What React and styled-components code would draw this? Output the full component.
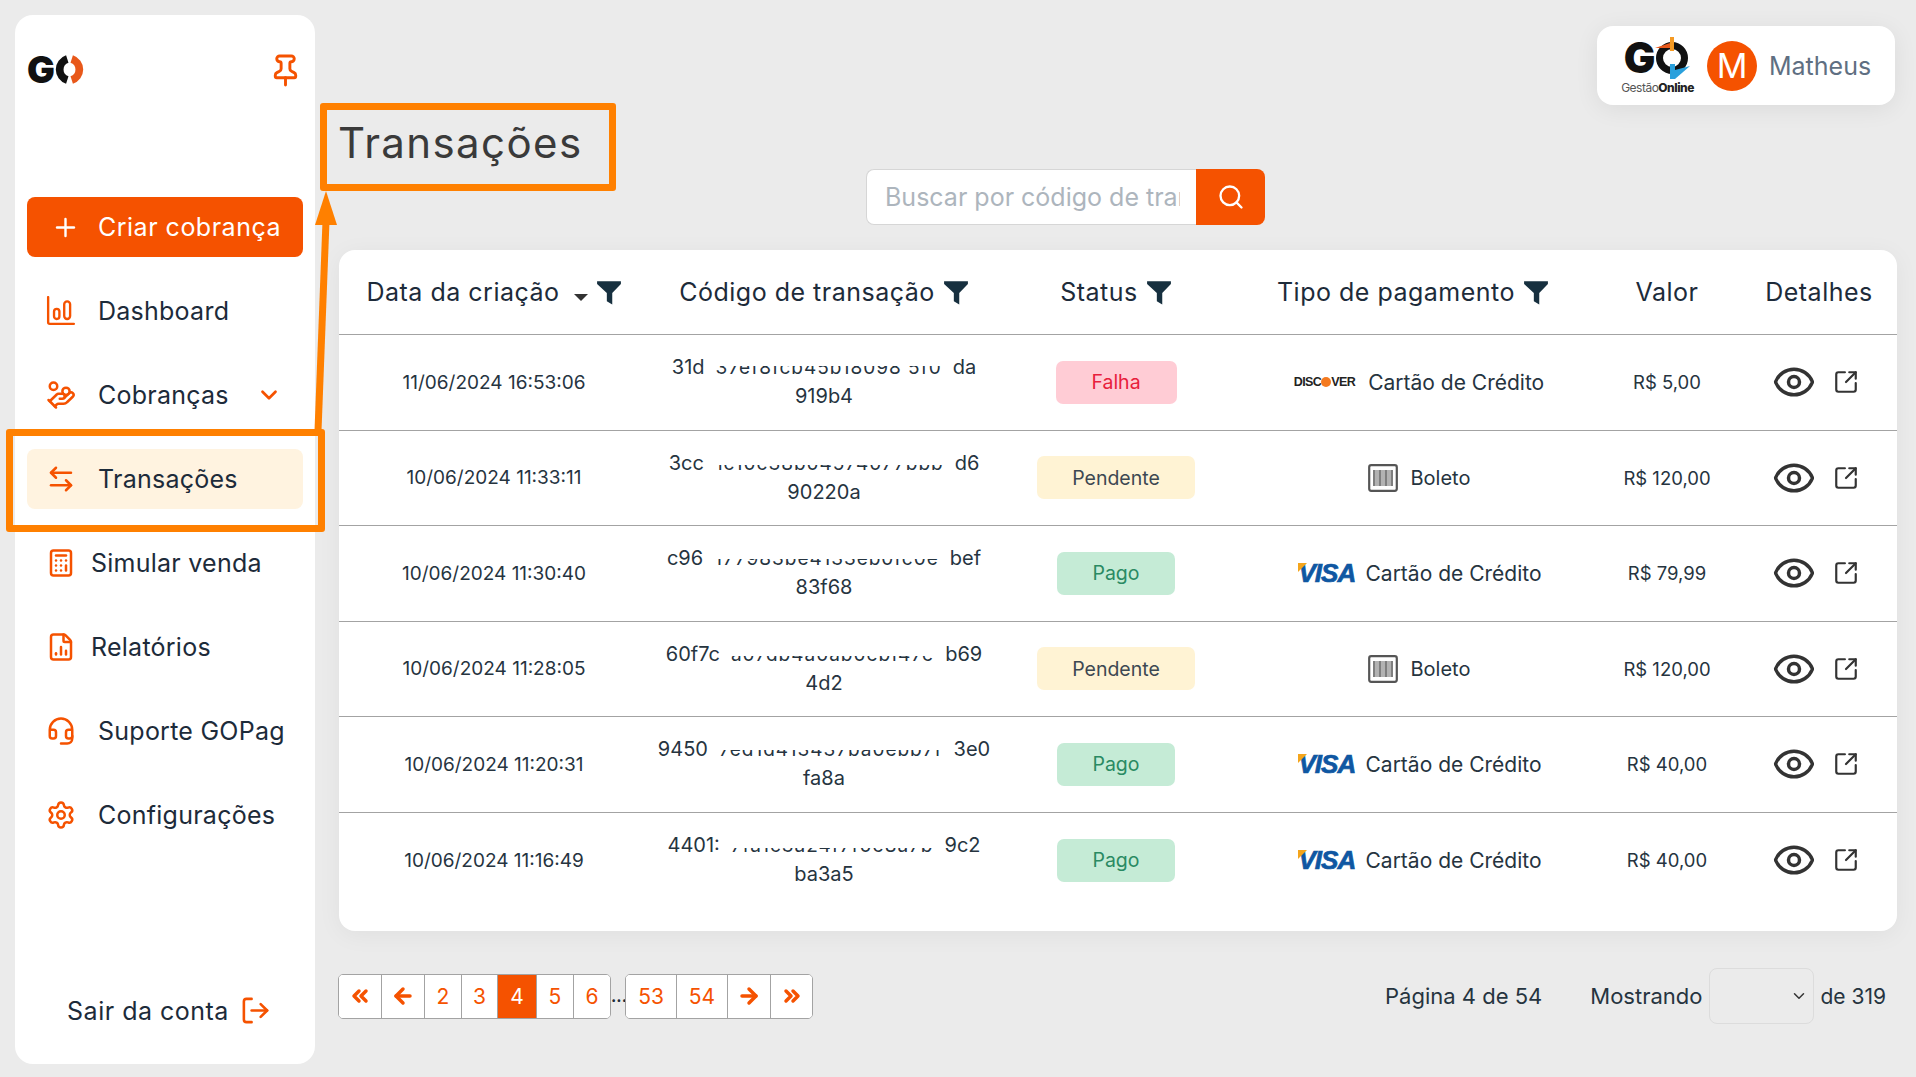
import React from "react";
import styled, { createGlobalStyle } from "styled-components";
import {
  ArrowLeft,
  ArrowLeftRight,
  ArrowRight,
  Calculator,
  ChevronDown,
  ChevronsLeft,
  ChevronsRight,
  Eye,
  FileChartColumn,
  HandCoins,
  Headset,
  LogOut,
  Pin,
  Plus,
  Search,
  Settings,
  SquareArrowOutUpRight
} from "lucide-react";

const orange = "#f55200";
const ink = "#1d2b3a";

const rows = [
  { date: "11/06/2024 16:53:06", head: "31d", mid: "37ef8fcb45b18098 5f0", tail: "da", rest: "919b4", cover: 13, status: "Falha", pay: "discover", value: "R$ 5,00" },
  { date: "10/06/2024 11:33:11", head: "3cc", mid: "1c10c38b04574077bbb", tail: "d6", rest: "90220a", cover: 16, status: "Pendente", pay: "boleto", value: "R$ 120,00" },
  { date: "10/06/2024 11:30:40", head: "c96", mid: "177983be4133eb0fc0e", tail: "bef", rest: "83f68", cover: 15, status: "Pago", pay: "visa", value: "R$ 79,99" },
  { date: "10/06/2024 11:28:05", head: "60f7c", mid: "a07db4a0ab0ebf47e", tail: "b69", rest: "4d2", cover: 16, status: "Pendente", pay: "boleto", value: "R$ 120,00" },
  { date: "10/06/2024 11:20:31", head: "9450", mid: "7ed1d413437ba0ebb7f", tail: "3e0", rest: "fa8a", cover: 15, status: "Pago", pay: "visa", value: "R$ 40,00" },
  { date: "10/06/2024 11:16:49", head: "4401:", mid: "7fa1c3a24f7f0e8a7b", tail: "9c2", rest: "ba3a5", cover: 17, status: "Pago", pay: "visa", value: "R$ 40,00" }
];

const columns = ["310px", "350px", "234px", "360px", "148px", "1fr"].join(" ");

const Funnel = () => (
  <svg width="26" height="26" viewBox="0 0 24 24" fill="#17303f">
    <path d="M1 2h22v2.500l-8 8.500v10.500l-5-3V13L1 4.500z" />
  </svg>
);

const Barcode = () => (
  <svg width="30" height="28" viewBox="0 0 30 28" fill="none" stroke="#555">
    <rect x="1.200" y="1.200" width="27.600" height="25.600" rx="2" strokeWidth="2.200" />
    {[6, 8, 10, 12, 14, 16, 18, 20, 22, 24].map((x, i) => (
      <line key={x} x1={x} x2={x} y1="6" y2="22" strokeWidth={i % 3 === 0 ? 1.500 : 0.900} />
    ))}
  </svg>
);

const DashIcon = () => (
  <svg width="30" height="30" viewBox="0 0 28 28" fill="none" stroke="currentColor" strokeWidth="2.200" strokeLinecap="round">
    <path d="M2 1v23.500a1.500 1.500 0 0 0 1.500 1.500H26" />
    <rect x="7.500" y="12" width="5" height="9.500" rx="2.500" />
    <rect x="17" y="5" width="5.500" height="16.500" rx="2.750" />
  </svg>
);

const SideLogoO = () => (
  <svg width="31" height="31" viewBox="0 0 28 28" fill="none" strokeWidth="7">
    <path d="M12 4.500A10 10 0 0 0 12 23.500" stroke="#111" />
    <path d="M16 4.500A10 10 0 0 1 16 23.500" stroke="#e8581a" />
  </svg>
);

const UserLogoO = () => (
  <svg width="38" height="44" viewBox="0 0 38 44" fill="none">
    <circle cx="19" cy="22" r="12.500" stroke="#111" strokeWidth="7" />
    <polygon points="2,12 17,7 17,12" fill="#e8591c" />
    <rect x="17" y="1" width="4" height="14" fill="#f59a23" />
    <rect x="17" y="28" width="5" height="15" fill="#2aa0dc" />
    <polygon points="22,43 37,30 22,34" fill="#2aa0dc" />
  </svg>
);

const Page = () => (
  <Shell>
    <GlobalStyle />
    <Sidebar>
      <SideTop>
        <Logo>
          G<SideLogoO />
        </Logo>
        <Pin size={35} color={orange} strokeWidth={2} />
      </SideTop>
      <CreateButton>
        <Plus size={29} strokeWidth={2} />
        Criar cobrança
      </CreateButton>
      <NavItem>
        <DashIcon />
        Dashboard
      </NavItem>
      <NavItem>
        <HandCoins size={30} strokeWidth={2} />
        Cobranças
        <NavChevron>
          <ChevronDown size={26} strokeWidth={2.500} />
        </NavChevron>
      </NavItem>
      <NavItem $active>
        <ArrowLeftRight size={30} strokeWidth={2} />
        Transações
      </NavItem>
      <NavItem $tight>
        <Calculator size={30} strokeWidth={2} />
        Simular venda
      </NavItem>
      <NavItem $tight>
        <FileChartColumn size={30} strokeWidth={2} />
        Relatórios
      </NavItem>
      <NavItem>
        <Headset size={30} strokeWidth={2} />
        Suporte GOPag
      </NavItem>
      <NavItem>
        <Settings size={30} strokeWidth={2} />
        Configurações
      </NavItem>
      <Logout>
        Sair da conta
        <LogOut size={31} color={orange} strokeWidth={2} />
      </Logout>
    </Sidebar>

    <Main>
      <Header>
        <Title>Transações</Title>
        <SearchBar>
          <SearchInput placeholder="Buscar por código de transação" />
          <SearchButton>
            <Search size={28} strokeWidth={2} />
          </SearchButton>
        </SearchBar>
        <UserCard>
          <UserLogo>
            <UserLogoMark>
              G<UserLogoO />
            </UserLogoMark>
            <UserLogoText>
              Gestão<b>Online</b>
            </UserLogoText>
          </UserLogo>
          <Avatar>M</Avatar>
          <UserName>Matheus</UserName>
        </UserCard>
      </Header>

      <Card>
        <HeadRow>
          <HeadCell>
            Data da criação
            <SortCaret />
            <Funnel />
          </HeadCell>
          <HeadCell>
            Código de transação
            <Funnel />
          </HeadCell>
          <HeadCell>
            Status
            <Funnel />
          </HeadCell>
          <HeadCell>
            Tipo de pagamento
            <Funnel />
          </HeadCell>
          <HeadCell>Valor</HeadCell>
          <HeadCell>Detalhes</HeadCell>
        </HeadRow>
        {rows.map(row => (
          <Row key={row.date}>
            <DateCell>{row.date}</DateCell>
            <CodeCell>
              <CodeLine>
                <span>{row.head}</span>
                <Hidden $cover={row.cover}>{row.mid}</Hidden>
                <span>{row.tail}</span>
              </CodeLine>
              <span>{row.rest}</span>
            </CodeCell>
            <Cell>
              <Badge $status={row.status}>{row.status}</Badge>
            </Cell>
            <PayCell>
              {row.pay === "discover" && (
                <Discover>
                  DISC<i />VER
                </Discover>
              )}
              {row.pay === "visa" && <Visa>VISA</Visa>}
              {row.pay === "boleto" ? (
                <>
                  <Barcode />
                  <BoletoLabel>Boleto</BoletoLabel>
                </>
              ) : (
                <CardLabel>Cartão de Crédito</CardLabel>
              )}
            </PayCell>
            <ValueCell>{row.value}</ValueCell>
            <Actions>
              <Eye size={44} strokeWidth={1.900} />
              <SquareArrowOutUpRight size={26} strokeWidth={2} />
            </Actions>
          </Row>
        ))}
      </Card>

      <Footer>
        <Pager>
          <PageGroup>
            <PageCell $w={42}>
              <ChevronsLeft size={24} strokeWidth={3.500} />
            </PageCell>
            <PageCell $w={43}>
              <ArrowLeft size={24} strokeWidth={3.500} />
            </PageCell>
            <PageCell $w={37}>2</PageCell>
            <PageCell $w={36}>3</PageCell>
            <PageCell $w={39} $current>4</PageCell>
            <PageCell $w={37}>5</PageCell>
            <PageCell $w={37}>6</PageCell>
          </PageGroup>
          <Dots>...</Dots>
          <PageGroup>
            <PageCell $w={50}>53</PageCell>
            <PageCell $w={51}>54</PageCell>
            <PageCell $w={43}>
              <ArrowRight size={24} strokeWidth={3.500} />
            </PageCell>
            <PageCell $w={42}>
              <ChevronsRight size={24} strokeWidth={3.500} />
            </PageCell>
          </PageGroup>
        </Pager>
        <PageInfo>
          <PageCount>Página 4 de 54</PageCount>
          Mostrando
          <SizeBox>
            <PageSize>
              <option></option>
            </PageSize>
            <SizeChevron>
              <ChevronDown size={18} strokeWidth={2} />
            </SizeChevron>
          </SizeBox>
          <TotalLabel>de 319</TotalLabel>
        </PageInfo>
      </Footer>
    </Main>

    <MarkBox $x={320} $y={103} $w={296} $h={88} />
    <MarkBox $x={6} $y={429} $w={319} $h={103} />
    <MarkArrow width="40" height="245" viewBox="0 0 40 245">
      <line x1="24" y1="30" x2="16" y2="240" stroke="#ff8000" strokeWidth="7" />
      <polygon points="24,0 35,34 13,34" fill="#ff8000" />
    </MarkArrow>
  </Shell>
);

export default Page;

// ==== STYLES ====
const GlobalStyle = createGlobalStyle`
  html, body {
    margin: 0;
    height: 100%;
    background: #ebebeb;
    overflow: hidden;
  }
  * {
    box-sizing: border-box;
  }
`;

const Shell = styled.div`
  position: relative;
  display: flex;
  width: 1916px;
  height: 1077px;
  background: #ebebeb;
  color: ${ink};
  font-family: Inter, "Liberation Sans", sans-serif;
`;

const Sidebar = styled.aside`
  width: 300px;
  height: 1049px;
  margin: 15px 0 0 15px;
  padding: 38px 12px 0;
  display: flex;
  flex-direction: column;
  gap: 24px;
  background: #fff;
  border-radius: 18px;
`;

const SideTop = styled.div`
  height: 120px;
  display: flex;
  justify-content: space-between;
  align-items: flex-start;
`;

const Logo = styled.div`
  display: flex;
  align-items: center;
  height: 32px;
  font-size: 37px;
  font-weight: 900;
  color: #111;
  letter-spacing: -1px;
`;

const CreateButton = styled.button`
  height: 60px;
  padding: 0 0 0 24px;
  display: flex;
  align-items: center;
  gap: 18px;
  border: 0;
  border-radius: 8px;
  background: ${orange};
  color: #fff;
  font: 400 25px Inter, sans-serif;
  letter-spacing: 0.5px;
`;

const NavItem = styled.div`
  height: 60px;
  padding-left: 19px;
  display: flex;
  align-items: center;
  gap: ${props => (props.$tight ? "15px" : "22px")};
  border-radius: 8px;
  background: ${props => (props.$active ? "#fff3e0" : "transparent")};
  font-size: 25px;
  letter-spacing: 0.25px;
  svg {
    color: ${orange};
    flex-shrink: 0;
  }
`;

const NavChevron = styled.span`
  display: flex;
  margin-left: auto;
  padding-right: 21px;
`;

const Logout = styled.div`
  margin-top: auto;
  margin-bottom: 38px;
  padding-left: 8px;
  display: flex;
  justify-content: center;
  align-items: center;
  gap: 11px;
  font-size: 25px;
  letter-spacing: 0.5px;
`;

const Main = styled.main`
  width: 1558px;
  margin-left: 24px;
  padding-top: 26px;
`;

const Header = styled.header`
  height: 224px;
  display: grid;
  grid-template-columns: 527px 399px 1fr;
`;

const Title = styled.h1`
  margin: 90px 0 0 -1px;
  height: 54px;
  font-size: 42px;
  line-height: 54px;
  font-weight: 400;
  color: #3a3a3a;
  letter-spacing: 1.4px;
`;

const SearchBar = styled.div`
  margin-top: 143px;
  height: 56px;
  display: flex;
`;

const SearchInput = styled.input`
  width: 330px;
  padding: 0 16px 0 18px;
  border: 1px solid #d6d6d6;
  border-right: 0;
  border-radius: 8px 0 0 8px;
  background: #fff;
  font: 400 25px Inter, sans-serif;
  &::placeholder {
    color: #adb5bd;
    opacity: 1;
  }
`;

const SearchButton = styled.button`
  width: 69px;
  display: flex;
  align-items: center;
  justify-content: center;
  border: 0;
  border-radius: 0 8px 8px 0;
  background: ${orange};
  color: #fff;
`;

const UserCard = styled.div`
  justify-self: end;
  width: 298px;
  height: 79px;
  margin-right: 2px;
  padding-left: 22px;
  display: flex;
  align-items: center;
  background: #fff;
  border-radius: 16px;
  box-shadow: 0 4px 24px rgba(0, 0, 0, 0.07);
`;

const UserLogo = styled.div`
  width: 77px;
  display: flex;
  flex-direction: column;
  align-items: center;
  gap: 3px;
`;

const UserLogoMark = styled.div`
  display: flex;
  align-items: center;
  height: 40px;
  font-size: 42px;
  line-height: 40px;
  font-weight: 900;
  color: #111;
  letter-spacing: -2px;
`;

const UserLogoText = styled.div`
  font-size: 12px;
  line-height: 13px;
  letter-spacing: -0.5px;
  color: #555;
  b {
    color: #222;
    font-weight: 800;
  }
`;

const Avatar = styled.div`
  width: 50px;
  height: 50px;
  margin-left: 11px;
  display: flex;
  align-items: center;
  justify-content: center;
  border-radius: 50%;
  background: ${orange};
  color: #fff;
  font-size: 34px;
`;

const UserName = styled.div`
  margin-left: 12px;
  font-size: 25px;
  color: #5f6f82;
`;

const Card = styled.section`
  width: 1558px;
  height: 681px;
  background: #fff;
  border-radius: 16px;
  box-shadow: 0 4px 24px rgba(0, 0, 0, 0.05);
`;

const HeadRow = styled.div`
  height: 85px;
  display: grid;
  grid-template-columns: ${columns};
  border-bottom: 1.500px solid #a3a3a3;
`;

const HeadCell = styled.div`
  display: flex;
  align-items: center;
  justify-content: center;
  gap: 8px;
  font-size: 25px;
  letter-spacing: 0.5px;
`;

const SortCaret = styled.span`
  width: 0;
  height: 0;
  margin: 10px 0 0 6px;
  border-left: 7px solid transparent;
  border-right: 7px solid transparent;
  border-top: 7px solid #333;
`;

const Row = styled.div`
  height: 95.500px;
  display: grid;
  grid-template-columns: ${columns};
  border-bottom: 1.500px solid #a3a3a3;
  font-size: 20px;
  color: #26343f;
  &:last-child {
    border-bottom: 0;
  }
`;

const Cell = styled.div`
  display: flex;
  align-items: center;
  justify-content: center;
`;

const DateCell = styled(Cell)`
  font-size: 19px;
`;

const ValueCell = styled(Cell)`
  font-size: 18.500px;
`;

const CodeCell = styled.div`
  display: flex;
  flex-direction: column;
  align-items: center;
  justify-content: center;
  line-height: 29px;
`;

const CodeLine = styled.div`
  display: flex;
  justify-content: center;
  gap: 11px;
  white-space: nowrap;
`;

const Hidden = styled.span`
  position: relative;
  font-size: 19px;
  letter-spacing: 1px;
  &::after {
    content: "";
    position: absolute;
    left: 0;
    right: 0;
    top: 0;
    height: ${props => props.$cover}px;
    background: #fff;
  }
`;

const badgeColors = {
  Falha: { bg: "#ffccd5", fg: "#e8203c", w: 121 },
  Pendente: { bg: "#fff3d4", fg: "#3d4852", w: 158 },
  Pago: { bg: "#c5ebd6", fg: "#2a8a63", w: 118 }
};

const Badge = styled.span`
  width: ${props => badgeColors[props.$status].w}px;
  height: 43px;
  display: flex;
  align-items: center;
  justify-content: center;
  border-radius: 7px;
  background: ${props => badgeColors[props.$status].bg};
  color: ${props => badgeColors[props.$status].fg};
  font-size: 19.500px;
`;

const PayCell = styled(Cell)`
  gap: 13px;
  padding-left: 12px;
`;

const CardLabel = styled.span`
  font-size: 21px;
`;

const BoletoLabel = styled.span`
  font-size: 20px;
`;

const Discover = styled.span`
  display: flex;
  align-items: center;
  font: 700 12.500px "Liberation Sans", sans-serif;
  letter-spacing: -0.6px;
  color: #222;
  i {
    flex-shrink: 0;
    width: 10px;
    height: 10px;
    border-radius: 50%;
    background: #f47a20;
  }
`;

const Visa = styled.span`
  position: relative;
  width: 56px;
  padding-left: 2px;
  font: italic 700 26px/28px "Liberation Sans", sans-serif;
  letter-spacing: -1px;
  color: #0f57a2;
  -webkit-text-stroke: 0.7px #0f57a2;
  &::before {
    content: "";
    position: absolute;
    left: 1px;
    top: 4px;
    width: 0;
    height: 0;
    border-top: 9px solid #f4a51c;
    border-right: 9px solid transparent;
  }
`;

const Actions = styled(Cell)`
  gap: 17px;
  padding-right: 7px;
  color: #333;
`;

const Footer = styled.footer`
  margin-top: 37px;
  height: 56px;
  display: flex;
  justify-content: space-between;
  align-items: center;
`;

const Pager = styled.nav`
  display: flex;
  align-items: center;
  margin-left: -1px;
`;

const PageGroup = styled.div`
  display: flex;
  height: 45px;
  border: 1px solid #a3a3a3;
  border-radius: 5px;
  overflow: hidden;
  background: #fff;
`;

const PageCell = styled.span`
  width: ${props => props.$w}px;
  display: flex;
  align-items: center;
  justify-content: center;
  background: ${props => (props.$current ? orange : "#fff")};
  color: ${props => (props.$current ? "#fff" : orange)};
  font-size: 21px;
  & + & {
    border-left: 1px solid #a3a3a3;
  }
`;

const Dots = styled.span`
  width: 14px;
  text-align: center;
  font-size: 16px;
  font-weight: 700;
  line-height: 1;
`;

const PageInfo = styled.div`
  display: flex;
  align-items: center;
  gap: 7px;
  padding-right: 11px;
  font-size: 22px;
  color: #26343f;
`;

const PageCount = styled.span`
  margin-right: 41px;
`;

const TotalLabel = styled.span`
  font-size: 21px;
  margin-left: -1px;
`;

const SizeBox = styled.span`
  position: relative;
  display: flex;
`;

const PageSize = styled.select`
  width: 105px;
  height: 56px;
  appearance: none;
  border: 1px solid #dcdcdc;
  border-radius: 8px;
  background: transparent;
`;

const SizeChevron = styled.span`
  position: absolute;
  right: 6px;
  top: 19px;
  display: flex;
  pointer-events: none;
  color: #333;
`;

const MarkBox = styled.div`
  position: absolute;
  left: ${props => props.$x}px;
  top: ${props => props.$y}px;
  width: ${props => props.$w}px;
  height: ${props => props.$h}px;
  border: 7px solid #ff8000;
  border-radius: 3px;
`;

const MarkArrow = styled.svg`
  position: absolute;
  left: 302px;
  top: 191px;
`;
